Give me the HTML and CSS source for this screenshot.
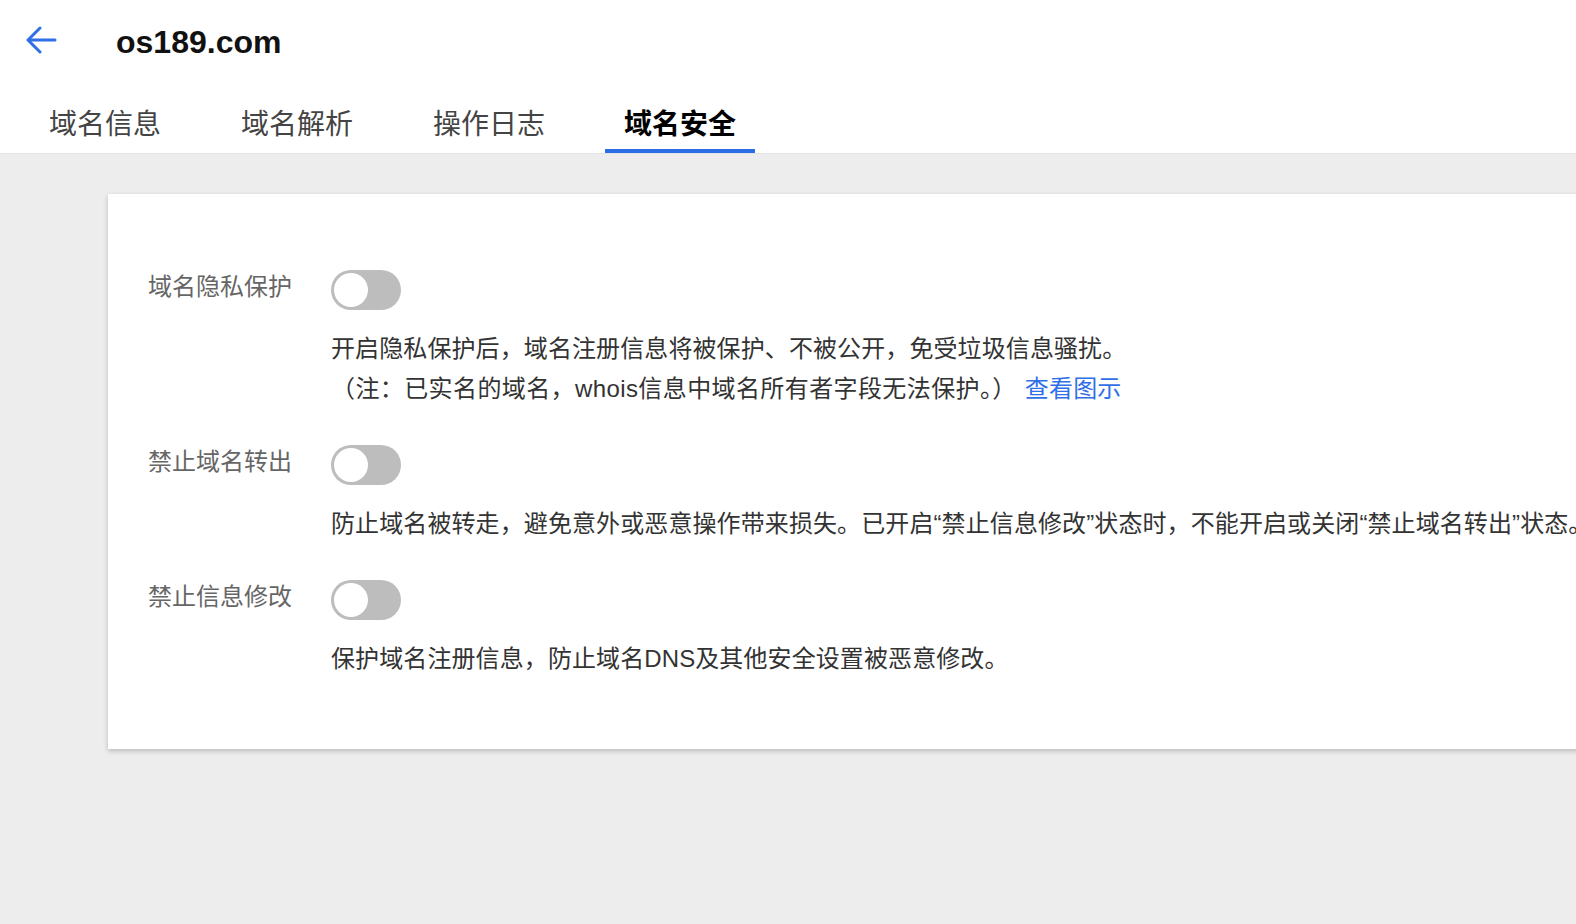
FILE: index.html
```html
<!DOCTYPE html>
<html lang="zh-CN">
<head>
    <meta charset="UTF-8">
    <meta name="viewport" content="width=device-width, initial-scale=1.0">
    <title>域名安全 - os189.com</title>
    <link rel="stylesheet" href="styles.css">
</head>
<body>
    <div class="header">
        <div class="title-bar">
            <a class="back" href="#">
                <svg width="32" height="32" viewBox="0 0 32 32" fill="none" stroke="#2f6fe8" stroke-width="3" stroke-linecap="round" stroke-linejoin="round">
                    <path d="M29 14H3"/>
                    <path d="M14 2L2 14L14 26"/>
                </svg>
            </a>
            <h1>os189.com</h1>
        </div>
        <div class="tabs">
            <div class="tab">域名信息</div>
            <div class="tab">域名解析</div>
            <div class="tab">操作日志</div>
            <div class="tab active">域名安全</div>
        </div>
    </div>

    <div class="main">
        <div class="card">
            <div class="setting">
                <div class="setting-head">
                    <div class="label">域名隐私保护</div>
                    <div class="switch"><span class="knob"></span></div>
                </div>
                <div class="desc">
                    <p>开启隐私保护后，域名注册信息将被保护、不被公开，免受垃圾信息骚扰。</p>
                    <p class="note">（注：已实名的域名，whois信息中域名所有者字段无法保护。）<a href="#">查看图示</a></p>
                </div>
            </div>
            <div class="setting">
                <div class="setting-head">
                    <div class="label">禁止域名转出</div>
                    <div class="switch"><span class="knob"></span></div>
                </div>
                <div class="desc">
                    <p>防止域名被转走，避免意外或恶意操作带来损失。已开启“禁止信息修改”状态时，不能开启或关闭“禁止域名转出”状态。</p>
                </div>
            </div>
            <div class="setting">
                <div class="setting-head">
                    <div class="label">禁止信息修改</div>
                    <div class="switch"><span class="knob"></span></div>
                </div>
                <div class="desc">
                    <p>保护域名注册信息，防止域名DNS及其他安全设置被恶意修改。</p>
                </div>
            </div>
        </div>
    </div>
</body>
</html>
```

FILE: styles.css
```css
html, body {
    height: 100%;
}
body {
    font-family: 'Liberation Sans', 'Noto Sans CJK SC', sans-serif;
    background-color: #ededed;
    margin: 0;
    color: #333333;
    overflow: hidden;
}
.header {
    background: #fff;
    border-bottom: 1px solid #e2e2e2;
}
.title-bar {
    display: flex;
    align-items: center;
    height: 85px;
    padding-left: 26px;
}
.back {
    display: flex;
    width: 32px;
    height: 32px;
    margin-top: -2px;
}
.title-bar h1 {
    margin: 0 0 0 58px;
    font-size: 32px;
    font-weight: bold;
    color: #111;
}
.tabs {
    display: flex;
    gap: 40px;
    padding-left: 29px;
}
.tab {
    padding: 16px 20px 0;
    line-height: 48px;
    font-size: 28px;
    color: #444;
    border-bottom: 4px solid transparent;
    cursor: pointer;
}
.tab.active {
    padding: 16px 19px 0;
    color: #000;
    font-weight: bold;
    border-bottom-color: #2b6de6;
}
.main {
    padding: 40px 0 0 108px;
}
.card {
    background: #fff;
    margin-right: -40px;
    padding: 76px 0 70px 40px;
    box-shadow: 0 2px 5px rgba(0, 0, 0, 0.22);
    overflow: hidden;
}
.setting {
    margin-bottom: 36px;
}
.setting:last-child {
    margin-bottom: 0;
}
.setting-head {
    display: flex;
    align-items: flex-start;
}
.label {
    width: 183px;
    font-size: 24px;
    line-height: 34px;
    color: #666;
}
.switch {
    width: 70px;
    height: 40px;
    border-radius: 20px;
    background: #bdbdbd;
    padding: 3px;
    box-sizing: border-box;
    cursor: pointer;
}
.knob {
    display: block;
    width: 34px;
    height: 34px;
    border-radius: 50%;
    background: #fff;
}
.desc {
    margin: 19px 0 0 183px;
    font-size: 24px;
    line-height: 40px;
    white-space: nowrap;
}
.desc p {
    margin: 0;
    letter-spacing: 0.1px;
}
.desc p.note {
    letter-spacing: 0.4px;
}
.desc a {
    color: #2f6fe8;
    text-decoration: none;
    margin-left: 8px;
    letter-spacing: 0.2px;
}
```
